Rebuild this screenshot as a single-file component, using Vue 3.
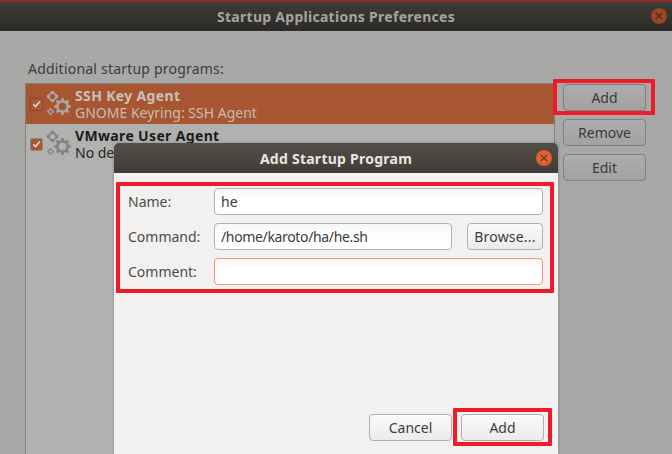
<script setup>
function gear(cx, cy, r, teeth) {
  const inner = r * 0.76
  const pts = []
  const step = (Math.PI * 2) / teeth
  for (let i = 0; i < teeth; i++) {
    const a = i * step
    const w = step * 0.24
    pts.push([a - w * 1.25, inner], [a - w * 0.7, r], [a + w * 0.7, r], [a + w * 1.25, inner])
  }
  const outline = pts
    .map(([a, d], i) => `${i ? 'L' : 'M'}${(cx + Math.cos(a) * d).toFixed(2)} ${(cy + Math.sin(a) * d).toFixed(2)}`)
    .join(' ')
  const h = r * 0.45
  return `${outline} Z M${cx - h} ${cy} a${h} ${h} 0 1 0 ${2 * h} 0 a${h} ${h} 0 1 0 ${-2 * h} 0 Z`
}
const gears = [gear(16.5, 15.5, 8.5, 8), gear(6.5, 5.5, 5.8, 4), gear(4.5, 20.5, 3.4, 4)]
const programs = [
  { name: 'SSH Key Agent', desc: 'GNOME Keyring: SSH Agent', selected: true },
  { name: 'VMware User Agent', desc: 'No description', selected: false },
]
</script>

<template>
  <div class="desktop">
    <section class="window back">
      <header class="titlebar">
        <span class="title">Startup Applications Preferences</span>
        <span class="close dim">
          <svg viewBox="0 0 8 8" width="8" height="8"><path d="M1 1 7 7 M7 1 1 7" stroke="#3a2a22" stroke-width="1.2" /></svg>
        </span>
      </header>
      <div class="prefs">
        <div class="left">
          <div class="caption">Additional startup programs:</div>
          <ul class="list">
            <li v-for="p in programs" :key="p.name" class="row" :class="{ selected: p.selected }">
              <span class="check">
                <svg viewBox="0 0 12 12" width="12" height="12"><path d="M2.5 6.2 5 8.8 9.6 3.2" fill="none" stroke="#d9d9d9" stroke-width="1.7" /></svg>
              </span>
              <svg class="icon" viewBox="0 0 26 26" width="26" height="26">
                <path v-for="(d, i) in gears" :key="i" :d="d" fill-rule="evenodd" />
              </svg>
              <div class="texts">
                <div class="name">{{ p.name }}</div>
                <div class="desc">{{ p.desc }}</div>
              </div>
            </li>
          </ul>
        </div>
        <div class="side">
          <button class="btn dimbtn">Add</button>
          <button class="btn dimbtn">Remove</button>
          <button class="btn dimbtn">Edit</button>
        </div>
      </div>
    </section>

    <section class="window dialog">
      <header class="titlebar dialogbar">
        <span class="title light">Add Startup Program</span>
        <span class="close hot">
          <svg viewBox="0 0 8 8" width="8" height="8"><path d="M1 1 7 7 M7 1 1 7" stroke="#6b2d17" stroke-width="1.2" /></svg>
        </span>
      </header>
      <div class="dialogbody">
        <div class="form">
          <label class="lbl">Name:</label>
          <div class="input wide">he</div>
          <label class="lbl">Command:</label>
          <div class="input path">/home/karoto/ha/he.sh</div>
          <button class="btn browse">Browse...</button>
          <label class="lbl">Comment:</label>
          <div class="input wide focus"></div>
        </div>
        <footer class="actions">
          <button class="btn action">Cancel</button>
          <button class="btn action">Add</button>
        </footer>
      </div>
    </section>

    <div class="mark mark-top"></div>
    <div class="mark mark-form"></div>
    <div class="mark mark-add"></div>
  </div>
</template>

<style>
html, body { margin: 0; background: #a8a8a7; }
</style>

<style scoped>
.desktop {
  position: relative;
  width: 672px;
  height: 454px;
  overflow: hidden;
  background: #a8a8a7;
  font-family: "Noto Sans", "Open Sans", sans-serif;
  font-size: 14px;
  color: #3a3a3a;
}
.window { position: absolute; display: flex; flex-direction: column; }
.back { left: 0; top: 0; width: 672px; height: 454px; border-top: 2px solid #8f2a25; box-sizing: border-box; }
.titlebar {
  position: relative;
  flex: none;
  height: 29px;
  display: flex;
  align-items: center;
  justify-content: center;
  background: linear-gradient(#3d3c38, #2b2a27);
}
.title { font-weight: 700; font-size: 14px; letter-spacing: 0.28px; color: #a5a4a0; }
.title.light { color: #e8e6e1; letter-spacing: 0.25px; }
.close {
  position: absolute;
  top: 6px;
  right: 5px;
  width: 16px;
  height: 16px;
  border-radius: 50%;
  display: flex;
  align-items: center;
  justify-content: center;
}
.close.dim { background: radial-gradient(#a85129, #8c3f1f); }
.close.hot { top: 7px; right: 6px; background: radial-gradient(#ec6f3e, #d24f22); }

.prefs { flex: 1; display: flex; padding: 29px 26px 0 25px; gap: 8px; min-height: 0; }
.left { width: 530px; flex: none; display: flex; flex-direction: column; }
.caption { height: 23px; padding-left: 3px; line-height: 18px; font-size: 14px; letter-spacing: 0.21px; color: #3c3c3b; }
.list {
  flex: 1;
  list-style: none;
  margin: 0;
  padding: 0;
  background: #b1b1b0;
  border: 1px solid #7f7f7e;
  border-bottom: 0;
}
.row { height: 40px; display: flex; align-items: center; padding-left: 4px; }
.row.selected { background: #a85531; }
.check {
  width: 11px;
  height: 11px;
  flex: none;
  display: flex;
  align-items: center;
  justify-content: center;
  border-radius: 2px;
  border: 1px solid #8b8b8a;
  background: #a95530;
}
.selected .check { border-color: #8e452a; background: #ab5a37; }
.icon { flex: none; margin-left: 3px; margin-right: 3px; fill: #838382; }
.selected .icon { fill: #a9a6a3; }
.texts { line-height: 17px; }
.name { font-weight: 700; font-size: 14px; letter-spacing: 0.35px; color: #1b1b1b; }
.desc { font-size: 14px; color: #242424; }
.selected .name { color: #c9c1bb; }
.selected .desc { color: #c9bcb4; }

.side { display: flex; flex-direction: column; gap: 8px; padding-top: 24px; }
.btn {
  box-sizing: border-box;
  width: 83px;
  height: 27px;
  padding: 0;
  font: inherit;
  color: #3c3c3c;
  border-radius: 4px;
  border: 1px solid #b0afad;
  background: linear-gradient(#fbfafa, #eceaea);
}
.dimbtn { border-color: #7f7f7e; background: linear-gradient(#adadad, #a2a2a1); color: #3a3a39; }

.dialog {
  left: 114px;
  top: 143px;
  width: 444px;
  height: 311px;
  box-shadow: 0 0 3px rgba(0, 0, 0, 0.25);
}
.dialogbar { height: 30px; border-radius: 5px 5px 0 0; background: linear-gradient(#524f48, #403d36); }
.dialogbody {
  flex: 1;
  display: flex;
  flex-direction: column;
  background: #f2f1f0;
  padding: 15px 14px 13px 14px;
  min-height: 0;
}
.form {
  display: grid;
  grid-template-columns: 86px 238px 15px 76px;
  grid-auto-rows: 27px;
  row-gap: 8px;
  align-items: center;
}
.lbl { color: #4b4b4b; }
.input {
  box-sizing: border-box;
  height: 27px;
  padding-left: 6px;
  line-height: 25px;
  color: #3b3b3b;
  border-radius: 4px;
  border: 1px solid #b2b1af;
  background: linear-gradient(#f6f6f5, #ffffff 40%);
}
.input.path { letter-spacing: -0.35px; }
.input.wide { grid-column: 2 / 5; }
.input.focus { border-color: #ec9a7b; }
.browse { grid-column: 4; width: 76px; letter-spacing: 0.2px; }
.actions { margin-top: auto; display: flex; justify-content: flex-end; gap: 9px; }
.action { width: 83px; }

.mark { position: absolute; box-sizing: border-box; border: 4px solid #ee1c2a; border-radius: 1px; pointer-events: none; }
.mark-top { left: 553px; top: 79px; width: 102px; height: 36px; }
.mark-form { left: 116px; top: 182px; width: 438px; height: 111px; }
.mark-add { left: 453px; top: 408px; width: 99px; height: 38px; }
</style>
